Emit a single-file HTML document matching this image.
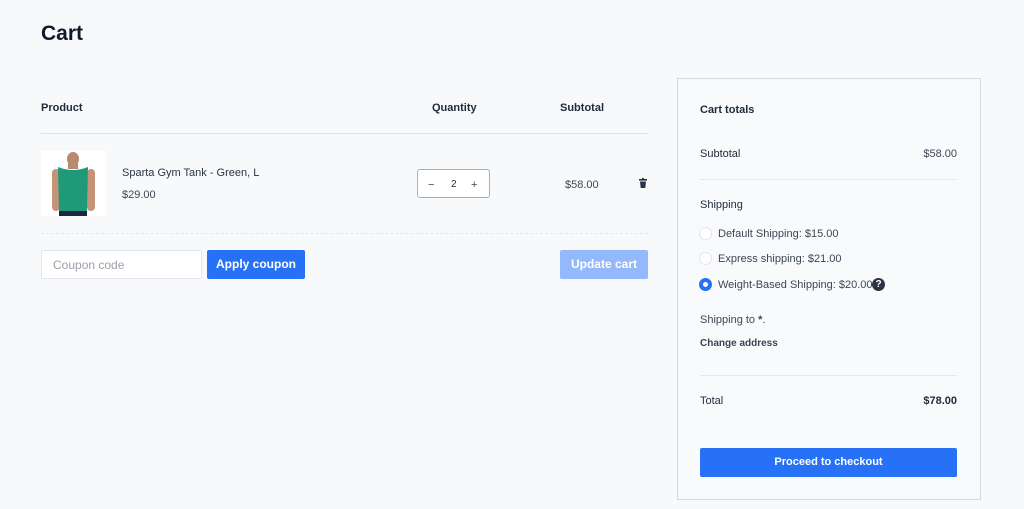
<!DOCTYPE html>
<html><head><style>
body{margin:0;width:1024px;height:509px;background:#f8f9fb;font-family:"Liberation Sans",sans-serif;color:#1f2a3a;position:relative;overflow:hidden}
.a{position:absolute;white-space:nowrap}
.t{font-size:11px;line-height:14px}
.b{font-weight:bold}
.g{color:#3d4655}
.radio{position:absolute;width:11px;height:11px;border-radius:50%;border:1px solid #e2e5ea;background:#fff}
</style></head><body>
<div class="a b" style="left:41px;top:21px;font-size:21px;line-height:26px;color:#111a2b">Cart</div>
<div class="a t b" style="left:41px;top:101px">Product</div>
<div class="a t b" style="left:432px;top:101px">Quantity</div>
<div class="a t b" style="left:560px;top:101px">Subtotal</div>
<div class="a" style="left:41px;top:133px;width:607px;height:1px;background:#dfe3e8"></div>
<div class="a" style="left:41px;top:151px;width:65px;height:65px;background:#fff">
<svg width="65" height="65"><ellipse cx="32" cy="8" rx="6" ry="7" fill="#b98a6e"/><rect x="27" y="12" width="10" height="6" fill="#b98a6e"/><rect x="11" y="18" width="8" height="42" rx="4" fill="#c49478"/><rect x="46" y="18" width="8" height="42" rx="4" fill="#c49478"/><path d="M17 16 Q32 22 47 16 L46 60 L18 60 Z" fill="#1e9a78"/><rect x="18" y="60" width="28" height="5" fill="#1d2540"/></svg></div>
<div class="a t" style="left:122px;top:166px;color:#2a3444">Sparta Gym Tank - Green, L</div>
<div class="a t g" style="left:122px;top:188px">$29.00</div>
<div class="a" style="left:417px;top:169px;width:71px;height:27px;border:1px solid #8fb2f5;border-radius:3px;background:#fff"></div>
<div class="a t g" style="left:428px;top:178px">−</div>
<div class="a t" style="left:451px;top:178px;font-size:10px">2</div>
<div class="a t g" style="left:471px;top:178px">+</div>
<div class="a t g" style="left:565px;top:178px">$58.00</div>
<svg class="a" style="left:639px;top:178px" width="8" height="10"><rect x="0" y="1" width="8" height="1.6" fill="#2a3444"/><rect x="3" y="0" width="2" height="2" fill="#2a3444"/><path d="M1 3.5 H7 L6.3 10 H1.7 Z" fill="#2a3444"/></svg>
<div class="a" style="left:41px;top:233px;width:607px;border-top:1px dashed #e3e6ea"></div>
<div class="a" style="left:41px;top:250px;width:159px;height:27px;border:1px solid #e3e6ea;background:#fff;border-radius:2px"></div>
<div class="a t" style="left:53px;top:258px;color:#9aa1ac;font-size:12px">Coupon code</div>
<div class="a t b" style="left:207px;top:250px;width:98px;height:29px;line-height:29px;text-align:center;background:#2671f5;color:#fff;border-radius:2px;font-size:12px">Apply coupon</div>
<div class="a t b" style="left:560px;top:250px;width:88px;height:29px;line-height:29px;text-align:center;background:#93b8fb;color:#fff;border-radius:2px;font-size:12px">Update cart</div>

<div class="a" style="left:677px;top:78px;width:302px;height:420px;border:1px solid #d5d9de;background:#f9fafc"></div>
<div class="a t b" style="left:700px;top:103px">Cart totals</div>
<div class="a t" style="left:700px;top:147px">Subtotal</div>
<div class="a t g" style="left:900px;top:147px;width:57px;text-align:right">$58.00</div>
<div class="a" style="left:700px;top:179px;width:257px;height:1px;background:#e3e6ea"></div>
<div class="a t" style="left:700px;top:198px">Shipping</div>
<div class="radio" style="left:699px;top:227px"></div>
<div class="a t g" style="left:718px;top:227px">Default Shipping: $15.00</div>
<div class="radio" style="left:699px;top:252px"></div>
<div class="a t g" style="left:718px;top:252px">Express shipping: $21.00</div>
<div class="radio" style="left:699px;top:278px;border:none;width:5px;height:5px;border:4px solid #2671f5"></div>
<div class="a t g" style="left:718px;top:278px">Weight-Based Shipping: $20.00</div>
<div class="a" style="left:872px;top:278px;width:13px;height:13px;border-radius:50%;background:#2a3444;color:#fff;font-size:10px;line-height:13px;text-align:center;font-weight:bold">?</div>
<div class="a t g" style="left:700px;top:313px">Shipping to <b>*</b>.</div>
<div class="a t b" style="left:700px;top:337px;font-size:10px;color:#3a4454">Change address</div>
<div class="a" style="left:700px;top:375px;width:257px;height:1px;background:#e3e6ea"></div>
<div class="a t" style="left:700px;top:394px">Total</div>
<div class="a t b" style="left:900px;top:394px;width:57px;text-align:right">$78.00</div>
<div class="a t b" style="left:700px;top:448px;width:257px;height:29px;line-height:29px;text-align:center;background:#2671f5;color:#fff;border-radius:2px">Proceed to checkout</div>
</body></html>
